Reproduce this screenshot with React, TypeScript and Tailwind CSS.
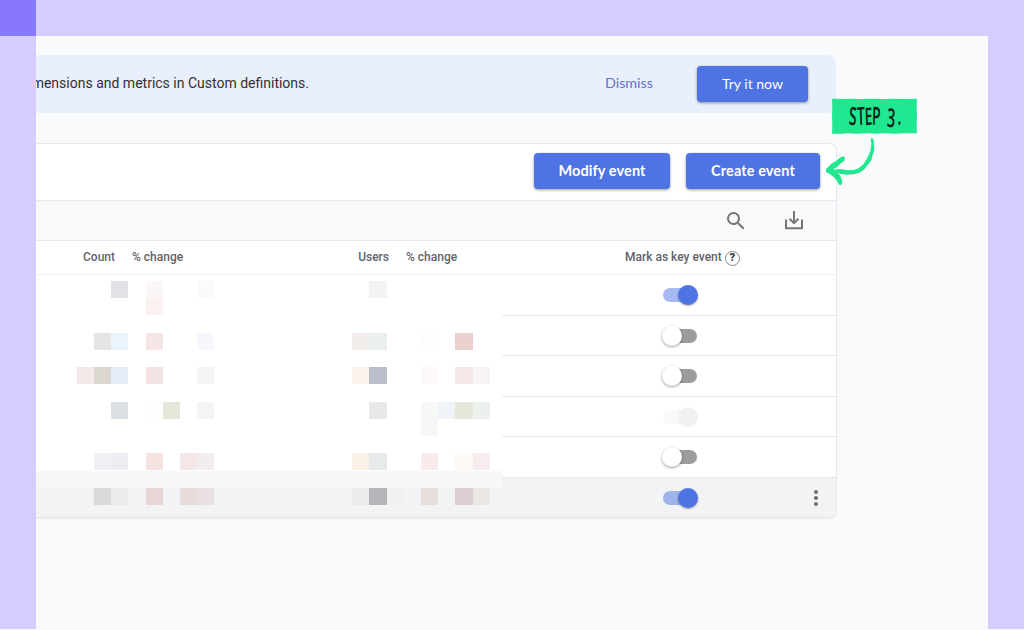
import React from 'react';
import { MdMoreVert, MdSearch } from 'react-icons/md';

type ToggleState = 'on' | 'off' | 'disabled';

// Redacted cells: [column, row, colour] on a 17.22px mosaic
const mosaic: [number, number, string][] = [
  [4, 0, '#e1e2e7'], [6, 0, '#fbf7f7'], [9, 0, '#fafafc'], [19, 0, '#f3f3f4'],
  [6, 1, '#faf1f0'],
  [3, 3, '#e6e4e5'], [4, 3, '#ebf4fb'], [6, 3, '#f5e6e5'], [9, 3, '#f7f7fd'],
  [18, 3, '#f1ebe9'], [19, 3, '#e9eeee'], [22, 3, '#fefcfd'], [24, 3, '#eccfcf'],
  [2, 5, '#f2eae9'], [3, 5, '#dbd7d0'], [4, 5, '#e5eef6'], [6, 5, '#f3e2e2'], [9, 5, '#f5f4f7'],
  [18, 5, '#faf2eb'], [19, 5, '#babec8'], [22, 5, '#fdf8f8'], [24, 5, '#f4e7e8'], [25, 5, '#f8f4f6'],
  [4, 7, '#dbe0e4'], [6, 7, '#fdfdfd'], [7, 7, '#e4e6da'], [9, 7, '#f3f4f5'],
  [19, 7, '#e8e8e8'], [22, 7, '#f6f8f5'], [23, 7, '#f0f4f8'], [24, 7, '#e7e8da'], [25, 7, '#ebf0ed'],
  [22, 8, '#f6f8f5'],
  [3, 10, '#f0f1f5'], [4, 10, '#ebedf3'], [6, 10, '#f4e3e1'], [8, 10, '#f4e7e8'], [9, 10, '#f4edef'],
  [18, 10, '#faf2e7'], [19, 10, '#e6eaeb'], [22, 10, '#f7ebec'], [24, 10, '#fcf8f4'], [25, 10, '#f7edee'],
  [3, 12, '#dad9d7'], [4, 12, '#eaebec'], [6, 12, '#e8d6d6'], [8, 12, '#e8dbdb'], [9, 12, '#e9e0e3'],
  [18, 12, '#eaebec'], [19, 12, '#b3b5b8'], [20, 12, '#f1f1f1'], [22, 12, '#e8dddd'], [24, 12, '#deccd3'], [25, 12, '#ebe7e4'],
];

const rows: { state: ToggleState; className: string }[] = [
  { state: 'on', className: 'h-[41px] border-b' },
  { state: 'off', className: 'h-10 border-b' },
  { state: 'off', className: 'h-[41px] border-b' },
  { state: 'disabled', className: 'h-10 border-b' },
  { state: 'off', className: 'h-[41px] border-b' },
  { state: 'on', className: 'h-[39px] bg-[#f1f3f4]' },
];

const trackStyles = {
  on: 'bg-[#4e73e3]/50',
  off: 'bg-[#9c9c9c]',
  disabled: 'bg-[#f9f9f9]',
};

const knobStyles = {
  on: 'left-[15px] bg-[#4e73e3] shadow-[0_1px_2px_rgba(0,0,0,0.35)]',
  off: '-left-px bg-white shadow-[0_1px_3px_rgba(0,0,0,0.4)]',
  disabled: 'left-[15px] bg-[#f1f1f1]',
};

function Toggle({ state }: { state: ToggleState }) {
  return (
    <div className={`relative h-[14px] w-[34px] rounded-full ${trackStyles[state]}`}>
      <div className={`absolute -top-[3px] size-5 rounded-full ${knobStyles[state]}`} />
    </div>
  );
}

function Button({ className, children }: { className: string; children: React.ReactNode }) {
  return (
    <button
      className={`h-9 shrink-0 rounded-[4px] bg-[#4e73e3] font-[Lato,sans-serif] text-white shadow-[0_1px_3px_rgba(0,0,0,0.4)] ${className}`}
    >
      {children}
    </button>
  );
}

function DownloadIcon() {
  return (
    <svg className="-mt-px" width="20" height="20" viewBox="0 0 20 20" fill="none" stroke="#757575" strokeWidth="2">
      <path d="M2 9.5V18.2H18V9.5" strokeLinejoin="round" />
      <path d="M10 1V13M5.5 8.8L10 13.2L14.5 8.8" />
    </svg>
  );
}

function Banner() {
  return (
    <div className="mt-[19px] flex h-[58px] w-[800px] items-center rounded-r-lg bg-[#e9effc]">
      <div className="flex w-[273px] justify-end pb-[2px] text-[14px] whitespace-nowrap text-[#303236]">
        mensions and metrics in Custom definitions.
      </div>
      <span className="ml-[296px] w-12 pb-[2px] font-[Lato,sans-serif] text-[14.3px] text-[#6272d4]">Dismiss</span>
      <Button className="ml-11 w-[111px] pb-[2px] text-[14px]">Try it now</Button>
    </div>
  );
}

function EventsTable() {
  return (
    <div className="mt-[30px] w-[801px] overflow-hidden rounded-r-lg border-t border-r border-b border-[#e6e8eb] bg-white shadow-[0_1px_1px_rgba(60,64,67,0.08)]">
      <div className="flex h-[57px] items-center justify-end gap-4 border-b border-[#e6e8eb] pr-4 pb-[2px]">
        <Button className="w-[136px] text-[14.5px] font-bold tracking-[0.1px]">Modify event</Button>
        <Button className="w-[134px] text-[14.5px] font-bold tracking-[0.1px]">Create event</Button>
      </div>
      <div className="flex h-10 items-center justify-end gap-[36px] border-b border-[#e6e8eb] bg-[#f8f9fb] pr-[32px]">
        <MdSearch size={24} color="#757575" />
        <DownloadIcon />
      </div>
      <div className="flex h-[34px] items-center border-b border-[#eeeff1] pb-px text-[12px] font-medium text-[#5f6368]">
        <span className="w-[79px] text-right">Count</span>
        <span className="ml-[17px] w-[220px]">% change</span>
        <span className="w-[37px] text-right">Users</span>
        <span className="ml-[17px] w-[219px]">% change</span>
        <span className="whitespace-nowrap">Mark as key event</span>
        <span className="mt-[2px] ml-[3px] flex size-[15px] items-center justify-center rounded-full border border-[#85878a] text-[11px] font-black text-[#3c3c3c]">
          ?
        </span>
      </div>

      <div className="flex h-[242px]">
        <div className="flex w-[466px] flex-col overflow-hidden bg-[linear-gradient(#fff_195.5px,#f5f7f9_195.5px,#f5f7f9_212.5px,#f1f3f4_212.5px)] pt-[6px] pl-[6.2px]">
          <div className="grid auto-rows-[17.22px] grid-cols-[repeat(27,17.22px)] grid-rows-[repeat(13,17.22px)]">
            {mosaic.map(([col, row, color]) => (
              <div key={`${col}-${row}`} style={{ gridColumn: col + 1, gridRow: row + 1, background: color }} />
            ))}
          </div>
        </div>
        <div className="flex-1">
          {rows.map((row, index) => (
            <div key={index} className={`flex items-center border-[#e6e8eb] pl-[161px] ${row.className}`}>
              <Toggle state={row.state} />
              {index === rows.length - 1 && <MdMoreVert className="ml-[107px]" size={24} color="#6b6d70" />}
            </div>
          ))}
        </div>
      </div>
    </div>
  );
}

function StepCallout() {
  return (
    <div className="absolute top-[90px] left-[815px] h-[110px] w-[120px]">
      <svg className="absolute inset-0" width="120" height="110" viewBox="0 0 360 330" fill="#20e890">
        <path d="M51 28L54 26L85 27L102 26L143 27L165 26L212 27L236 26L270 27L306 26L305 48L306 75L305 102L306 130L264 130L242 131L205 130L180 131L160 130L125 131L96 130L82 131L51 131L52 105L51 82L52 54Z" />
        <path d="M167 147L171 143L176 149L177 166L178 181L173 195L169 211L158 225L147 239L133 248L116 253L98 254L79 252L65 248L56 239L75 237L98 241L117 240L131 235L146 222L157 204L166 184L169 162Z" />
        <path d="M33 237L49 221L64 212L77 202L86 199L90 204L88 212L76 221L67 231L56 236L61 244L73 253L80 266L82 277L79 285L72 284L66 272L56 261L45 253L33 246Z" />
      </svg>
      <div className="absolute top-[8px] left-[34px] origin-left scale-x-[0.56] font-['Open_Sans',sans-serif] text-[25px] leading-[34px] font-semibold whitespace-nowrap text-[#0d211a]">
        <span className="inline-block rotate-6">S</span>
        <span className="inline-block -rotate-3">T</span>
        <span className="inline-block -rotate-3 text-[24px]">E</span>
        <span className="inline-block rotate-3 text-[25px]">P</span>
        <span className="relative top-[2px] ml-[11px] inline-block rotate-6 text-[26px]">3</span>
        <span className="ml-1">.</span>
      </div>
    </div>
  );
}

export default function App() {
  return (
    <div className="relative flex h-[630px] w-[1024px] flex-col overflow-hidden bg-[#f8fafc] pb-px font-[Roboto,sans-serif]">
      <div className="flex h-9 shrink-0 bg-[#d6cdff]">
        <div className="w-9 bg-[#8878ff]" />
      </div>
      <div className="flex flex-1">
        <div className="z-10 w-9 bg-[#d6cdff]" />
        <main className="flex-1">
          <Banner />
          <EventsTable />
        </main>
        <div className="w-9 bg-[#d6cdff]" />
      </div>
      <StepCallout />
    </div>
  );
}
